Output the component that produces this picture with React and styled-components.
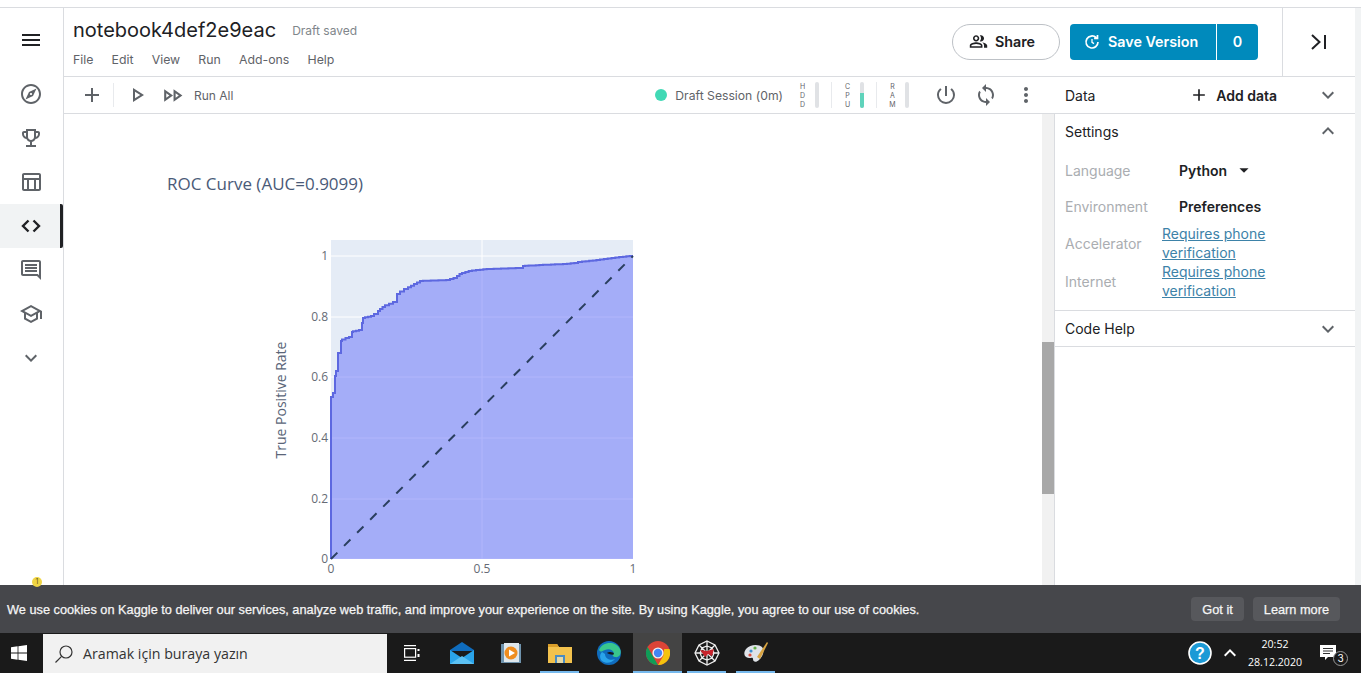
import React from "react";
import styled, { createGlobalStyle } from "styled-components";
import {
  MdMenu,
  MdOutlineExplore,
  MdOutlineEmojiEvents,
  MdOutlineTableChart,
  MdOutlineComment,
  MdOutlineSchool,
  MdExpandMore,
  MdExpandLess,
  MdAdd,
  MdOutlinePlayArrow,
  MdOutlineFastForward,
  MdPowerSettingsNew,
  MdSync,
  MdMoreVert,
  MdOutlinePeopleAlt,
  MdArrowDropDown,
  MdOutlineKeyboardArrowUp
} from "react-icons/md";

const GlobalStyle = createGlobalStyle`
  html, body {
    margin: 0;
    padding: 0;
    background: #fff;
    overflow: hidden;
  }
  * {
    box-sizing: border-box;
  }
`;

const Page = styled.div`
  width: 1361px;
  height: 673px;
  display: flex;
  flex-direction: column;
  font-family: Inter, "Liberation Sans", sans-serif;
  overflow: hidden;
`;
const TopStrip = styled.div`
  height: 8px;
  flex: none;
  border-bottom: 1px solid #dadce0;
`;
const Workspace = styled.div`
  flex: 1;
  min-height: 0;
  display: flex;
`;
const SideNav = styled.nav`
  position: relative;
  width: 64px;
  flex: none;
  border-right: 1px solid #dadce0;
  display: flex;
  flex-direction: column;
  padding-top: 10px;
`;
const NavItem = styled.div`
  height: 44px;
  width: ${p => (p.$active ? 63 : 62)}px;
  display: flex;
  align-items: center;
  justify-content: center;
  font-size: ${p => p.$size || 24}px;
  color: ${p => (p.$dark ? "#202124" : "#5f6368")};
  background: ${p => (p.$active ? "#f1f3f4" : "transparent")};
  border-right: ${p => (p.$active ? "3px solid #202124" : "none")};
  border-radius: ${p => (p.$active ? "0 2px 2px 0" : "0")};
  padding-left: ${p => (p.$active ? "2px" : "0")};
`;
const MenuItem = styled(NavItem)`
  margin-bottom: 10px;
`;
const Badge = styled.span`
  position: absolute;
  left: 32px;
  top: 569px;
  width: 10px;
  height: 10px;
  border-radius: 50%;
  background: #f0d544;
  color: #5f5a20;
  font-size: 7px;
  line-height: 10px;
  text-align: center;
`;
const Main = styled.div`
  flex: 1;
  min-width: 0;
  display: flex;
  flex-direction: column;
`;
const Header = styled.header`
  height: 69px;
  flex: none;
  display: flex;
  border-bottom: 1px solid #dadce0;
`;
const TitleBlock = styled.div`
  flex: 1;
  padding: 10px 0 0 9px;
`;
const TitleRow = styled.div`
  display: flex;
  align-items: center;
  gap: 16px;
`;
const Title = styled.h1`
  margin: 0;
  font-size: 20px;
  line-height: 24px;
  font-weight: 400;
  color: #202124;
`;
const Saved = styled.span`
  font-size: 12px;
  padding-top: 1px;
  color: #80868b;
`;
const MenuBar = styled.div`
  display: flex;
  gap: 18.2px;
  margin-top: 10px;
  font-size: 12.3px;
  line-height: 16px;
  color: #5f6368;
`;
const HeaderActions = styled.div`
  display: flex;
  align-items: center;
  padding-bottom: 1px;
`;
const ShareButton = styled.button`
  width: 108px;
  height: 36px;
  border: 1px solid #bdc1c6;
  border-radius: 18px;
  background: #fff;
  display: flex;
  align-items: center;
  justify-content: center;
  gap: 7px;
  padding: 0 8px 0 0;
  font: 600 14.3px Inter, sans-serif;
  color: #202124;
  svg {
    font-size: 19px;
  }
`;
const SaveGroup = styled.div`
  display: flex;
  height: 36px;
  margin: 0 24px 0 10px;
  border-radius: 4px;
  background: #008abc;
  color: #fff;
  font-weight: 600;
  font-size: 14.3px;
`;
const SaveLabel = styled.div`
  width: 147px;
  display: flex;
  align-items: center;
  gap: 7px;
  padding-left: 13px;
  border-right: 1px solid #fff;
`;
const SaveCount = styled.div`
  width: 41px;
  display: flex;
  align-items: center;
  justify-content: center;
`;
const CollapseButton = styled.div`
  width: 73px;
  height: 68px;
  border-left: 1px solid #dadce0;
  display: flex;
  align-items: center;
  justify-content: center;
  margin-bottom: -1px;
`;
const RightGutter = styled.div`
  width: 6px;
  flex: none;
  background: #f1f3f4;
`;
const Body = styled.div`
  flex: 1;
  min-height: 0;
  display: flex;
`;
const Notebook = styled.div`
  width: 991px;
  flex: none;
  display: flex;
  flex-direction: column;
  min-height: 0;
`;
const Toolbar = styled.div`
  height: 37px;
  flex: none;
  display: flex;
  align-items: center;
  border-bottom: 1px solid #dadce0;
  color: #5f6368;
`;
const ToolIcon = styled.span`
  display: flex;
  font-size: ${p => p.$size || 24}px;
  margin-left: ${p => p.$ml || 0}px;
  color: #5f6368;
`;
const ToolLeft = styled.div`
  display: flex;
  align-items: center;
  padding-left: 16px;
  flex: 1;
`;
const ToolDivider = styled.span`
  width: 1px;
  height: 24px;
  background: #e8eaed;
  margin: 0 11px 0 9px;
`;
const RunAll = styled.span`
  font-size: 12px;
  margin-left: 9px;
`;
const Session = styled.div`
  display: flex;
  align-items: center;
  gap: 8px;
  font-size: 12.2px;
  color: #5f6368;
  margin-right: 16px;
`;
const StatusDot = styled.span`
  width: 12px;
  height: 12px;
  border-radius: 50%;
  background: #41d9b5;
`;
const Meter = styled.div`
  display: flex;
  align-items: center;
  gap: 9px;
  padding-right: ${p => (p.$last ? 0 : 12)}px;
  height: 26px;
  margin-right: ${p => (p.$last ? 25 : 12)}px;
  border-right: ${p => (p.$last ? "none" : "1px solid #e8eaed")};
`;
const MeterLabel = styled.span`
  width: 7px;
  font-size: 7px;
  line-height: 9px;
  text-align: center;
  word-break: break-all;
  color: #5f6368;
`;
const MeterTrack = styled.span`
  width: 4px;
  height: 26px;
  background: #e0e2e5;
  border-radius: 2px;
  display: flex;
  align-items: flex-end;
  overflow: hidden;
`;
const MeterFill = styled.span`
  width: 100%;
  background: #5fd3bb;
`;
const ToolActions = styled.div`
  display: flex;
  align-items: center;
  gap: 16px;
  margin-right: 17px;
`;
const ContentRow = styled.div`
  flex: 1;
  min-height: 0;
  display: flex;
`;
const Output = styled.div`
  flex: 1;
  padding: 58px 0 0 103px;
  overflow: hidden;
`;
const ChartTitle = styled.div`
  font-family: "Open Sans", sans-serif;
  font-size: 17px;
  line-height: 24px;
  color: #4a5a78;
`;
const ChartSvg = styled.svg`
  display: block;
  margin: 35px 0 0 103px;
  font-family: "Open Sans", sans-serif;
`;
const ScrollTrack = styled.div`
  width: 13px;
  flex: none;
  background: #f1f1f1;
  padding-top: 228px;
  border-right: 1px solid #dadce0;
`;
const ScrollThumb = styled.div`
  height: 152px;
  background: #a8a8a8;
`;
const Panel = styled.aside`
  flex: 1;
  min-width: 0;
`;
const Section = styled.section`
  border-bottom: 1px solid #dadce0;
`;
const SectionHead = styled.div`
  height: ${p => p.$h}px;
  display: flex;
  align-items: center;
  padding: 0 15px 0 10px;
  font-size: 14px;
  color: #202124;
`;
const SectionName = styled.span`
  flex: 1;
`;
const AddData = styled.span`
  display: flex;
  align-items: center;
  gap: 7px;
  margin-right: 39px;
  font-weight: 600;
  font-size: 14px;
`;
const Chevron = styled.span`
  display: flex;
  font-size: 24px;
  color: #5f6368;
`;
const SettingsGrid = styled.div`
  padding: 4px 0 0 10px;
  height: 162px;
`;
const SettingRow = styled.div`
  display: flex;
  align-items: center;
  height: ${p => p.$h}px;
  font-size: 14px;
`;
const SettingLabel = styled.span`
  width: ${p => p.$w || 114}px;
  flex: none;
  color: #aaadb1;
`;
const SettingValue = styled.span`
  display: flex;
  align-items: center;
  gap: 6px;
  font-weight: 600;
  font-size: 14px;
  color: #202124;
`;
const PhoneLink = styled.a`
  color: #3d82a8;
  text-decoration: underline;
  line-height: 19px;
  width: 120px;
`;
const CookieBar = styled.div`
  height: 48px;
  flex: none;
  display: flex;
  align-items: center;
  justify-content: space-between;
  padding: 0 21px 0 7px;
  background: #46474b;
  color: #f5f5f5;
  font-family: "Liberation Sans", sans-serif;
  font-size: 12.75px;
  -webkit-text-stroke: 0.25px #f5f5f5;
`;
const CookieButtons = styled.div`
  display: flex;
  gap: 9px;
`;
const CookieButton = styled.span`
  height: 24px;
  padding: 0 11px;
  display: flex;
  align-items: center;
  border-radius: 4px;
  background: #57585c;
`;
const Taskbar = styled.div`
  height: 40px;
  flex: none;
  display: flex;
  background: #1a1a1a;
  color: #fff;
`;
const StartButton = styled.div`
  width: 43px;
  padding-right: 5px;
  display: flex;
  align-items: center;
  justify-content: center;
`;
const SearchBox = styled.div`
  width: 344px;
  margin-top: 1px;
  background: #f1f1f1;
  display: flex;
  align-items: center;
  gap: 9px;
  padding-left: 11px;
  font-family: "Open Sans", sans-serif;
  font-size: 14.2px;
  color: #333;
`;
const TaskView = styled.div`
  width: 50px;
  display: flex;
  align-items: center;
  justify-content: center;
`;
const TaskCell = styled.div`
  width: 49px;
  display: flex;
  align-items: center;
  justify-content: center;
  background: ${p => (p.$active ? "#444" : "transparent")};
  box-shadow: ${p => (p.$running ? "inset 0 -2px 0 #76b9ed" : "none")};
  clip-path: ${p => (p.$running && !p.$active ? "inset(0 5px)" : "none")};
`;
const Tray = styled.div`
  margin-left: auto;
  padding-right: 10px;
  display: flex;
  align-items: center;
`;
const TrayIcon = styled.span`
  display: flex;
  font-size: 24px;
  margin-left: ${p => p.$ml || 0}px;
`;
const Clock = styled.div`
  width: 54px;
  margin: 0 17px 0 6px;
  text-align: center;
  font-size: 10.6px;
  line-height: 18px;
  font-family: "Open Sans", sans-serif;
`;
const Notice = styled.div`
  position: relative;
  width: 32px;
  height: 40px;
  display: flex;
  align-items: center;
`;
const NoticeCount = styled.span`
  position: absolute;
  right: 3px;
  bottom: 7px;
  width: 15px;
  height: 15px;
  border-radius: 50%;
  border: 1px solid #999;
  background: #1a1a1a;
  font-size: 10px;
  line-height: 13px;
  text-align: center;
`;

// corners of the ROC line in page pixels, OX/OY move them into the svg
const rocPoints = [
  [331, 558], [331, 404], [333, 396], [335, 392], [336, 375], [338, 370], [341, 352], [342, 340],
  [349, 337], [352, 336], [353, 331], [362, 329], [363, 322], [365, 317], [374, 315],
  [378, 313], [380, 310], [385, 306], [397, 301], [400, 293], [408, 288], [417, 283],
  [423, 280], [450, 279], [457, 277], [462, 273], [472, 270], [480, 269], [490, 268],
  [523, 267], [525, 265], [543, 264], [567, 263], [578, 262], [582, 261], [600, 259],
  [623, 256], [633, 255]
];
const OX = 270;
const OY = 230;

function buildStepPath(points) {
  let d = `M${points[0][0] - OX} ${points[0][1] - OY}`;
  for (let i = 1; i < points.length; i++) {
    const [x0, y0] = points[i - 1];
    const [x1, y1] = points[i];
    const n = Math.max(1, Math.ceil((x1 - x0) / 4));
    for (let s = 1; s <= n; s++) {
      d += `V${y0 + ((y1 - y0) * s) / n - OY}H${x0 + ((x1 - x0) * s) / n - OX}`;
    }
  }
  return d;
}
const rocPath = buildStepPath(rocPoints);

const yTicks = [
  { label: "1", y: 255 },
  { label: "0.8", y: 316 },
  { label: "0.6", y: 376 },
  { label: "0.4", y: 437 },
  { label: "0.2", y: 498 },
  { label: "0", y: 558 }
];

function RocChart() {
  const left = 331 - OX;
  const right = 633 - OX;
  const top = 239 - OY;
  const bottom = 558 - OY;
  return (
    <ChartSvg width="380" height="350" viewBox="0 0 380 350">
      <rect x={left} y={top} width={right - left} height={bottom - top} fill="#e5ecf6" />
      <line x1={482 - OX} x2={482 - OX} y1={top} y2={bottom} stroke="#fff" />
      {yTicks.map(t => (
        <line key={t.label} x1={left} x2={right} y1={t.y - OY} y2={t.y - OY} stroke="#fff" />
      ))}
      <path d={`${rocPath}V${bottom}Z`} fill="#636efa" fillOpacity="0.5" stroke="none" />
      <path d={rocPath} fill="none" stroke="#5d68e0" strokeWidth="2" />
      <line
        x1={left}
        y1={bottom}
        x2={right}
        y2={255 - OY}
        stroke="#2a3f5f"
        strokeWidth="2"
        strokeDasharray="9 9.5"
      />
      {yTicks.map(t => (
        <text key={t.label} x={left - 3} y={t.y - OY + 4} textAnchor="end" fontSize="12" fill="#666b75">
          {t.label}
        </text>
      ))}
      {[
        ["0", 331],
        ["0.5", 482],
        ["1", 633]
      ].map(([label, x]) => (
        <text key={label} x={x - OX} y={bottom + 14} textAnchor="middle" fontSize="12" fill="#666b75">
          {label}
        </text>
      ))}
      <text
        transform={`translate(${286 - OX} ${399 - OY}) rotate(-90)`}
        textAnchor="middle"
        fontSize="14"
        fill="#5a6578"
      >
        True Positive Rate
      </text>
    </ChartSvg>
  );
}

const CodeIcon = () => (
  <svg width="24" height="24" viewBox="0 0 24 24" fill="none" stroke="#202124" strokeWidth="2.4">
    <path d="M9.5 6.5L4 12l5.5 5.5M14.5 6.5L20 12l-5.5 5.5" />
  </svg>
);
const LastPageIcon = () => (
  <svg width="24" height="24" viewBox="0 0 24 24" fill="none" stroke="#202124" strokeWidth="2">
    <path d="M5 5l7.5 7L5 19M18 5v14" />
  </svg>
);
const SaveIcon = () => (
  <svg width="18" height="18" viewBox="0 0 18 18" fill="none" stroke="#fff" strokeWidth="1.7">
    <path d="M15 9a6 6 0 1 1-1.8-4.3M14.5 2v3.4h-3.4" />
    <path d="M9 6v3.4l2 1.2" strokeWidth="1.3" />
  </svg>
);
const WindowsLogo = () => (
  <svg width="16" height="16" viewBox="0 0 16 16" fill="#fff">
    <path d="M0 2.2l6.6-.9v6.3H0zM7.4 1.2L16 0v7.6H7.4zM0 8.4h6.6v6.3L0 13.8zM7.4 8.4H16V16l-8.6-1.2z" />
  </svg>
);
const SearchGlyph = () => (
  <svg width="20" height="20" viewBox="0 0 20 20" fill="none" stroke="#333" strokeWidth="1.2">
    <circle cx="12" cy="8" r="6" />
    <path d="M7.6 12.4L1.5 18.5" />
  </svg>
);
const TaskViewGlyph = () => (
  <svg width="16" height="16" viewBox="0 0 16 16" fill="none" stroke="#fff" strokeWidth="1.2">
    <path d="M0 .6h12M0 15.4h12" />
    <rect x=".6" y="3.6" width="11" height="8.6" />
    <path d="M14.5 4v2M14.5 9v3" strokeWidth="2" />
  </svg>
);
const MailGlyph = () => (
  <svg width="26" height="22" viewBox="0 0 26 22">
    <path d="M1 8L13 0l12 8v1H1z" fill="#0f6cbd" />
    <path d="M1 8l12 8 12-8v14H1z" fill="#2aa4ea" />
    <path d="M1 22l12-8 12 8z" fill="#5cc1f3" />
  </svg>
);
const MediaGlyph = () => (
  <svg width="22" height="22" viewBox="0 0 22 22">
    <rect x="1" y="2" width="20" height="19" fill="#6f93ad" />
    <rect x="4" y="1" width="15" height="19" fill="#dfe7ec" />
    <circle cx="11" cy="11" r="6.5" fill="#ef8d1f" />
    <path d="M9 7.5l6 3.5-6 3.5z" fill="#fff" />
  </svg>
);
const FolderGlyph = () => (
  <svg width="24" height="20" viewBox="0 0 24 20">
    <path d="M0 1h9l2 3h13v16H0z" fill="#f3c24d" />
    <path d="M0 1h9l2 3H0z" fill="#d99e2a" />
    <rect x="7" y="12" width="10" height="8" fill="#4a8cc4" />
    <rect x="9" y="14" width="6" height="6" fill="#e6d9a6" />
  </svg>
);
const EdgeGlyph = () => (
  <svg width="24" height="24" viewBox="0 0 24 24">
    <circle cx="12" cy="12" r="12" fill="#0f6cbd" />
    <path d="M2 9C5 1 18-1 23 8c2 5-1 9-5 8-3 0-3-3-1-4-1-3-5-5-9-3-3 1-4 3-6 0z" fill="#39c68d" />
    <path d="M8 13c0 5 6 7 10 5-3 4-9 5-13 2-2-2-3-6 0-9z" fill="#2aa4ea" />
    <path d="M10 12c2-2 7-1 7 1 0 1-4 1-7-1z" fill="#1a1a1a" />
  </svg>
);
const ChromeGlyph = () => (
  <svg width="24" height="24" viewBox="0 0 24 24">
    <circle cx="12" cy="12" r="12" fill="#db4437" />
    <path d="M12 24A12 12 0 0 1 1.6 6l5.2 9 5.2 9z" fill="#0f9d58" />
    <path d="M12 24l5.2-9 1-7H23.5A12 12 0 0 1 12 24z" fill="#f4c20d" />
    <circle cx="12" cy="12" r="5.6" fill="#f1f1f1" />
    <circle cx="12" cy="12" r="4.2" fill="#4285f4" />
  </svg>
);
const WebGlyph = () => (
  <svg width="26" height="26" viewBox="0 0 26 26" fill="none" stroke="#eee" strokeWidth="1.3">
    <path d="M13 1l8 4 4 8-4 8-8 4-8-4-4-8 4-8z" />
    <path d="M13 6l5 2 2 5-2 5-5 2-5-2-2-5 2-5zM13 1v24M1 13h24M5 5l16 16M21 5L5 21" />
    <path d="M6 10l7 1 7-2-2 7-4-2-3 3-2-3z" fill="#c8232c" stroke="none" />
  </svg>
);
const PaintGlyph = () => (
  <svg width="26" height="26" viewBox="0 0 26 26">
    <path d="M3 9c4-5 13-5 16-2 3 4 1 9-3 13-3 3-6 2-6-1 0-2-2-1-4-1C1 18 0 13 3 9z" fill="#dfe3e8" />
    <circle cx="8" cy="11" r="1.6" fill="#3b8ed0" />
    <circle cx="12" cy="8" r="1.6" fill="#65b04a" />
    <circle cx="7" cy="15" r="1.6" fill="#d94b3d" />
    <path d="M14 17L24 2l1 1-8 16z" fill="#d9a441" />
  </svg>
);
const HelpGlyph = () => (
  <svg width="24" height="24" viewBox="0 0 24 24">
    <circle cx="12" cy="12" r="11" fill="#1c9ad6" stroke="#fff" strokeWidth="1.6" />
    <text x="12" y="17.5" textAnchor="middle" fontFamily="Liberation Sans" fontWeight="700" fontSize="16" fill="#fff">
      ?
    </text>
  </svg>
);
const NoticeGlyph = () => (
  <svg width="20" height="18" viewBox="0 0 20 18">
    <path d="M1 1h16v12H9l-3 3v-3H1z" fill="#fff" />
    <path d="M4 4.5h10M4 7h10M4 9.5h7" stroke="#333" />
  </svg>
);

export default function App() {
  const meters = [
    { label: "HDD", fill: 0 },
    { label: "CPU", fill: 58 },
    { label: "RAM", fill: 0, last: true }
  ];
  return (
    <Page>
      <GlobalStyle />
      <TopStrip />
      <Workspace>
        <SideNav>
          <MenuItem $dark><MdMenu /></MenuItem>
          <NavItem><MdOutlineExplore /></NavItem>
          <NavItem><MdOutlineEmojiEvents /></NavItem>
          <NavItem><MdOutlineTableChart /></NavItem>
          <NavItem $active><CodeIcon /></NavItem>
          <NavItem><MdOutlineComment /></NavItem>
          <NavItem><MdOutlineSchool /></NavItem>
          <NavItem><MdExpandMore /></NavItem>
          <Badge>1</Badge>
        </SideNav>
        <Main>
          <Header>
            <TitleBlock>
              <TitleRow>
                <Title>notebook4def2e9eac</Title>
                <Saved>Draft saved</Saved>
              </TitleRow>
              <MenuBar>
                <span>File</span>
                <span>Edit</span>
                <span>View</span>
                <span>Run</span>
                <span>Add-ons</span>
                <span>Help</span>
              </MenuBar>
            </TitleBlock>
            <HeaderActions>
              <ShareButton><MdOutlinePeopleAlt />Share</ShareButton>
              <SaveGroup>
                <SaveLabel><SaveIcon />Save Version</SaveLabel>
                <SaveCount>0</SaveCount>
              </SaveGroup>
              <CollapseButton><LastPageIcon /></CollapseButton>
            </HeaderActions>
          </Header>
          <Body>
            <Notebook>
              <Toolbar>
                <ToolLeft>
                  <ToolIcon><MdAdd /></ToolIcon>
                  <ToolDivider />
                  <ToolIcon><MdOutlinePlayArrow /></ToolIcon>
                  <ToolIcon $size={25} $ml={11}><MdOutlineFastForward /></ToolIcon>
                  <RunAll>Run All</RunAll>
                </ToolLeft>
                <Session><StatusDot />Draft Session (0m)</Session>
                {meters.map(m => (
                  <Meter key={m.label} $last={m.last}>
                    <MeterLabel>{m.label}</MeterLabel>
                    <MeterTrack>
                      <MeterFill style={{ height: `${m.fill}%` }} />
                    </MeterTrack>
                  </Meter>
                ))}
                <ToolActions>
                  <ToolIcon><MdPowerSettingsNew /></ToolIcon>
                  <ToolIcon><MdSync /></ToolIcon>
                  <ToolIcon><MdMoreVert /></ToolIcon>
                </ToolActions>
              </Toolbar>
              <ContentRow>
                <Output>
                  <ChartTitle>ROC Curve (AUC=0.9099)</ChartTitle>
                  <RocChart />
                </Output>
                <ScrollTrack><ScrollThumb /></ScrollTrack>
              </ContentRow>
            </Notebook>
            <Panel>
              <Section>
                <SectionHead $h={36}>
                  <SectionName>Data</SectionName>
                  <AddData><MdAdd size={20} />Add data</AddData>
                  <Chevron><MdExpandMore /></Chevron>
                </SectionHead>
              </Section>
              <Section>
                <SectionHead $h={34}>
                  <SectionName>Settings</SectionName>
                  <Chevron><MdExpandLess /></Chevron>
                </SectionHead>
                <SettingsGrid>
                  <SettingRow $h={36}>
                    <SettingLabel>Language</SettingLabel>
                    <SettingValue>Python <MdArrowDropDown size={22} /></SettingValue>
                  </SettingRow>
                  <SettingRow $h={36}>
                    <SettingLabel>Environment</SettingLabel>
                    <SettingValue>Preferences</SettingValue>
                  </SettingRow>
                  <SettingRow $h={38}>
                    <SettingLabel $w={97}>Accelerator</SettingLabel>
                    <PhoneLink>Requires phone verification</PhoneLink>
                  </SettingRow>
                  <SettingRow $h={38}>
                    <SettingLabel $w={97}>Internet</SettingLabel>
                    <PhoneLink>Requires phone verification</PhoneLink>
                  </SettingRow>
                </SettingsGrid>
              </Section>
              <Section>
                <SectionHead $h={35}>
                  <SectionName>Code Help</SectionName>
                  <Chevron><MdExpandMore /></Chevron>
                </SectionHead>
              </Section>
            </Panel>
          </Body>
        </Main>
        <RightGutter />
      </Workspace>
      <CookieBar>
        <span>We use cookies on Kaggle to deliver our services, analyze web traffic, and improve your experience on the site. By using Kaggle, you agree to our use of cookies.</span>
        <CookieButtons>
          <CookieButton>Got it</CookieButton>
          <CookieButton>Learn more</CookieButton>
        </CookieButtons>
      </CookieBar>
      <Taskbar>
        <StartButton><WindowsLogo /></StartButton>
        <SearchBox><SearchGlyph />Aramak için buraya yazın</SearchBox>
        <TaskView><TaskViewGlyph /></TaskView>
        <TaskCell><MailGlyph /></TaskCell>
        <TaskCell><MediaGlyph /></TaskCell>
        <TaskCell $running><FolderGlyph /></TaskCell>
        <TaskCell><EdgeGlyph /></TaskCell>
        <TaskCell $running $active><ChromeGlyph /></TaskCell>
        <TaskCell $running><WebGlyph /></TaskCell>
        <TaskCell $running><PaintGlyph /></TaskCell>
        <Tray>
          <HelpGlyph />
          <TrayIcon $ml={6}><MdOutlineKeyboardArrowUp /></TrayIcon>
          <Clock>20:52<br />28.12.2020</Clock>
          <Notice>
            <NoticeGlyph />
            <NoticeCount>3</NoticeCount>
          </Notice>
        </Tray>
      </Taskbar>
    </Page>
  );
}
